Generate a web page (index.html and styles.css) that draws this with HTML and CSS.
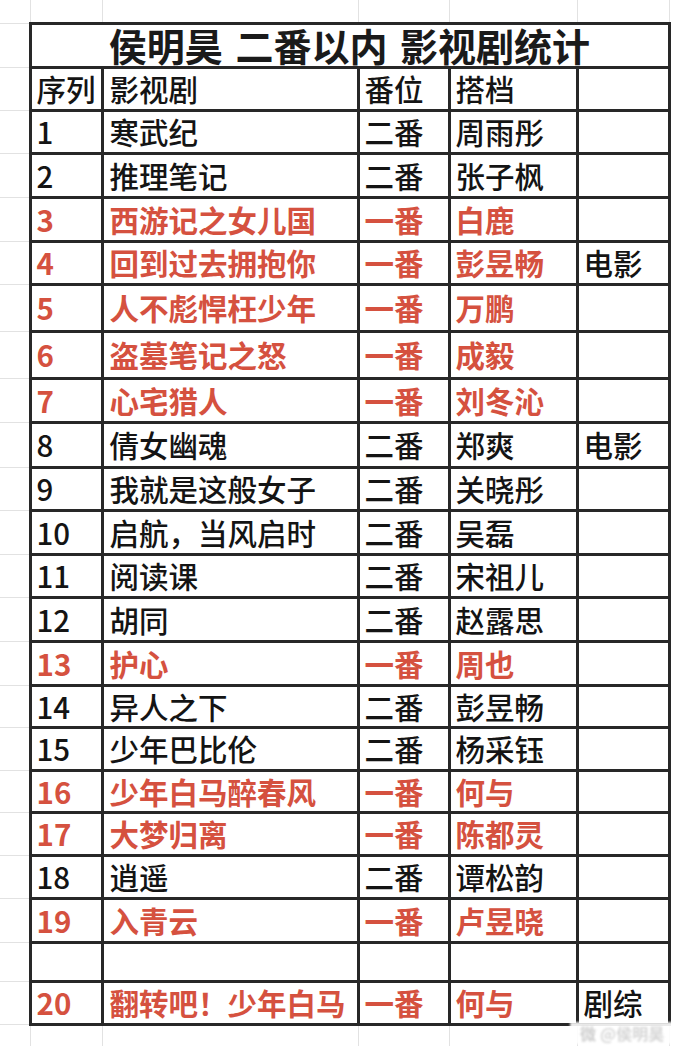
FILE: index.html
```html
<!DOCTYPE html>
<html lang="zh-CN">
<head>
<meta charset="utf-8">
<title>侯明昊 二番以内 影视剧统计</title>
<link rel="stylesheet" href="styles.css">
</head>
<body>
<div class="sheet">
<table class="grid">
  <colgroup>
    <col class="c-m"><col class="c-1"><col class="c-2"><col class="c-3"><col class="c-4"><col class="c-5"><col class="c-r">
  </colgroup>
  <tbody>
    <tr class="h23 spacer"><td class="m"></td><td></td><td></td><td></td><td></td><td></td><td class="r"></td></tr>
    <tr class="h44"><td class="m"></td><td class="title" colspan="5">侯明昊 二番以内 影视剧统计</td><td class="r"></td></tr>
    <tr class="h43 head"><td class="m"></td><td>序列</td><td>影视剧</td><td>番位</td><td>搭档</td><td></td><td class="r"></td></tr>
    <tr class="h43"><td class="m"></td><td>1</td><td>寒武纪</td><td>二番</td><td>周雨彤</td><td></td><td class="r"></td></tr>
    <tr class="h44"><td class="m"></td><td>2</td><td>推理笔记</td><td>二番</td><td>张子枫</td><td></td><td class="r"></td></tr>
    <tr class="h44 red"><td class="m"></td><td>3</td><td>西游记之女儿国</td><td>一番</td><td>白鹿</td><td></td><td class="r"></td></tr>
    <tr class="h43 red"><td class="m"></td><td>4</td><td>回到过去拥抱你</td><td>一番</td><td>彭昱畅</td><td class="note">电影</td><td class="r"></td></tr>
    <tr class="h47 red"><td class="m"></td><td>5</td><td>人不彪悍枉少年</td><td>一番</td><td>万鹏</td><td></td><td class="r"></td></tr>
    <tr class="h47 red"><td class="m"></td><td>6</td><td>盗墓笔记之怒</td><td>一番</td><td>成毅</td><td></td><td class="r"></td></tr>
    <tr class="h44 red"><td class="m"></td><td>7</td><td>心宅猎人</td><td>一番</td><td>刘冬沁</td><td></td><td class="r"></td></tr>
    <tr class="h45"><td class="m"></td><td>8</td><td>倩女幽魂</td><td>二番</td><td>郑爽</td><td class="note">电影</td><td class="r"></td></tr>
    <tr class="h43"><td class="m"></td><td>9</td><td>我就是这般女子</td><td>二番</td><td>关晓彤</td><td></td><td class="r"></td></tr>
    <tr class="h44"><td class="m"></td><td>10</td><td>启航，当风启时</td><td>二番</td><td>吴磊</td><td></td><td class="r"></td></tr>
    <tr class="h43"><td class="m"></td><td>11</td><td>阅读课</td><td>二番</td><td>宋祖儿</td><td></td><td class="r"></td></tr>
    <tr class="h44"><td class="m"></td><td>12</td><td>胡同</td><td>二番</td><td>赵露思</td><td></td><td class="r"></td></tr>
    <tr class="h44 red"><td class="m"></td><td>13</td><td>护心</td><td>一番</td><td>周也</td><td></td><td class="r"></td></tr>
    <tr class="h42"><td class="m"></td><td>14</td><td>异人之下</td><td>二番</td><td>彭昱畅</td><td></td><td class="r"></td></tr>
    <tr class="h43"><td class="m"></td><td>15</td><td>少年巴比伦</td><td>二番</td><td>杨采钰</td><td></td><td class="r"></td></tr>
    <tr class="h42 red"><td class="m"></td><td>16</td><td>少年白马醉春风</td><td>一番</td><td>何与</td><td></td><td class="r"></td></tr>
    <tr class="h43 red"><td class="m"></td><td>17</td><td>大梦归离</td><td>一番</td><td>陈都灵</td><td></td><td class="r"></td></tr>
    <tr class="h43"><td class="m"></td><td>18</td><td>逍遥</td><td>二番</td><td>谭松韵</td><td></td><td class="r"></td></tr>
    <tr class="h44 red"><td class="m"></td><td>19</td><td>入青云</td><td>一番</td><td>卢昱晓</td><td></td><td class="r"></td></tr>
    <tr class="h39"><td class="m"></td><td></td><td></td><td></td><td></td><td></td><td class="r"></td></tr>
    <tr class="h43 red"><td class="m"></td><td>20</td><td>翻转吧！少年白马</td><td>一番</td><td>何与</td><td class="note">剧综</td><td class="r"></td></tr>
    <tr class="h30 spacer"><td class="m"></td><td></td><td></td><td></td><td></td><td></td><td class="r"></td></tr>
  </tbody>
</table>
<div class="watermark"><span class="wm-logo">微</span>@侯明昊</div>
</div>
</body>
</html>
```

FILE: styles.css
```css
html, body {
  margin: 0;
  padding: 0;
  background: #ffffff;
}

.sheet {
  position: relative;
  width: 690px;
  height: 1046px;
  overflow: hidden;
}

.grid {
  border-collapse: collapse;
  table-layout: fixed;
  width: 690px;
  font-family: "Noto Sans CJK SC", "Noto Sans", sans-serif;
  color: #141414;
}

.c-m { width: 30px; }
.c-1 { width: 72px; }
.c-2 { width: 256px; }
.c-3 { width: 91px; }
.c-4 { width: 128px; }
.c-5 { width: 92px; }
.c-r { width: 21px; }

.grid td {
  border: 3px solid #282828;
  padding: 0 0 0 5px;
  font-size: 29.5px;
  font-weight: 500;
  line-height: 1.1;
  white-space: nowrap;
  vertical-align: middle;
}

.grid td.m {
  border-top: 1px solid #e2e2e2;
  border-bottom: 1px solid #e2e2e2;
  border-left: none;
  padding: 0;
}

.grid td.r {
  border-top: none;
  border-bottom: none;
  border-right: none;
  padding: 0;
}

.spacer td {
  border-top: none;
  border-bottom: none;
  border-left: 1px solid #e2e2e2;
  border-right: 1px solid #e2e2e2;
}

.spacer td.m { border-left: none; border-top: none; }

.grid td:nth-child(3) { padding-left: 6px; }

.grid td.title {
  text-align: center;
  font-size: 38px;
  font-weight: 700;
  line-height: 1;
  padding: 0;
  word-spacing: 4px;
  color: #1a1a1a;
}

.head td { font-weight: 500; }

.red td {
  color: #d5513f;
  font-weight: 700;
}

.red td.note, .grid td.note {
  color: #141414;
  font-weight: 500;
}

.h23 { height: 23px; }
.h30 { height: 30px; }
.h39 { height: 39px; }
.h42 { height: 42px; }
.h43 { height: 43px; }
.h44 { height: 44px; }
.h45 { height: 45px; }
.h47 { height: 47px; }

.watermark {
  position: absolute;
  left: 570px;
  top: 1022px;
  width: 112px;
  height: 22px;
  background: rgba(255, 255, 255, 0.9);
  color: #d6d6d6;
  font-family: "Noto Sans CJK SC", sans-serif;
  font-size: 16px;
  font-weight: 700;
  line-height: 22px;
  padding-left: 10px;
  box-sizing: border-box;
  filter: blur(1.2px);
  white-space: nowrap;
}

.wm-logo {
  display: inline-block;
  margin-right: 4px;
  color: #cfcfcf;
}
```
